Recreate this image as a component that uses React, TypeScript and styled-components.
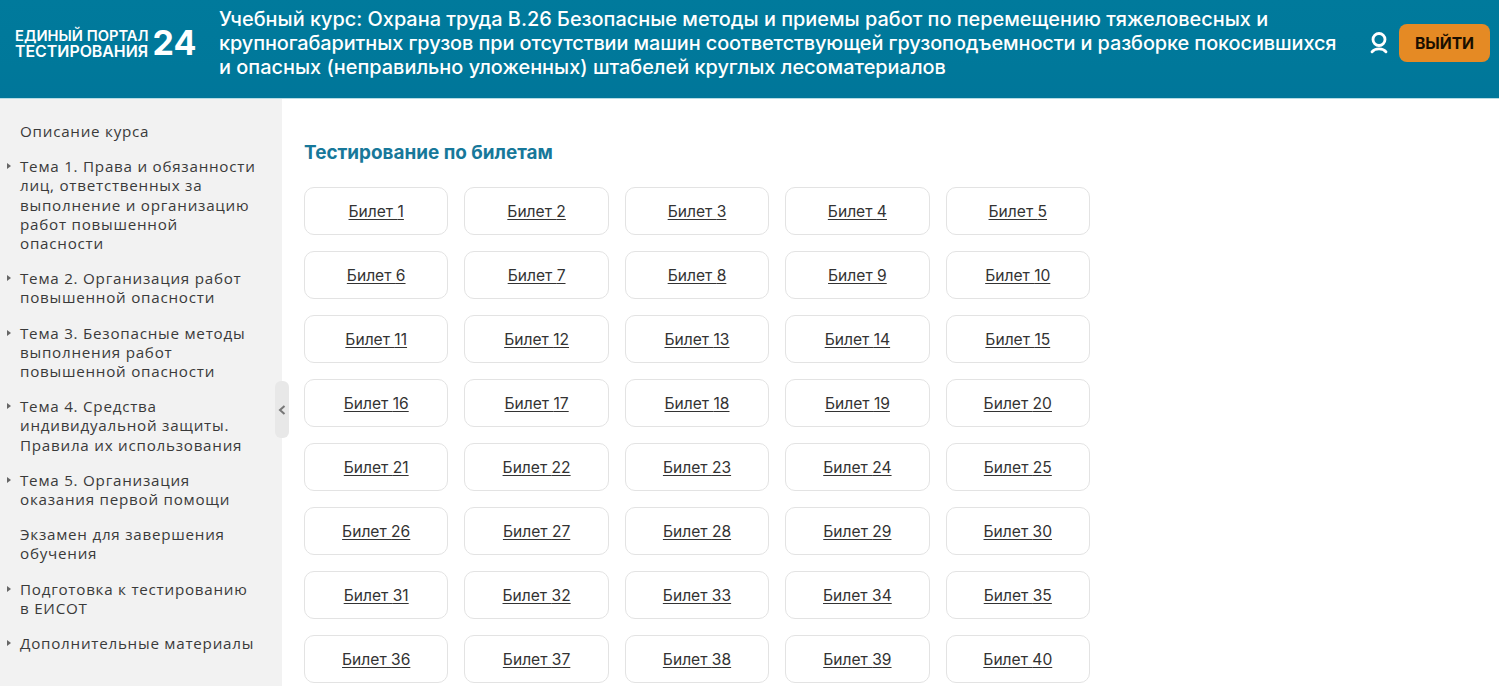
import React from "react";
import styled, { createGlobalStyle } from "styled-components";

const Global = createGlobalStyle`
  html, body { margin: 0; padding: 0; height: 686px; overflow: hidden; background: #fff; }
  body { font-family: Inter, "Liberation Sans", sans-serif; }
  * { box-sizing: border-box; }
`;

const Page = styled.div`
  display: flex;
  flex-direction: column;
  height: 686px;
  overflow: hidden;
`;

const Header = styled.header`
  flex: none;
  height: 99px;
  padding-bottom: 12px;
  display: flex;
  align-items: center;
  background: linear-gradient(180deg, #007a9c 0%, #00789a 70%, #00769a 100%);
  border-bottom: 1px solid #b5dbe4;
  color: #fff;
`;

const Logo = styled.div`
  flex: none;
  width: 219px;
  padding-left: 15px;
  display: flex;
  align-items: center;
  gap: 4px;
`;

const LogoText = styled.div`
  display: flex;
  flex-direction: column;
  font-weight: 600;
  white-space: nowrap;
  padding-top: 1px;
`;

const LogoLine = styled.span<{ $size: number }>`
  font-size: ${(p) => p.$size}px;
  line-height: 15px;
`;

const LogoNumber = styled.div`
  font-size: 34px;
  font-weight: 700;
  line-height: 40px;
`;

const Title = styled.h1`
  flex: none;
  width: 1125px;
  margin: 0;
  font-size: 19.9px;
  font-weight: 500;
  line-height: 24px;
  color: #fff;
`;

const TitleLine = styled.span<{ $tight?: boolean }>`
  display: block;
  white-space: nowrap;
  letter-spacing: ${(p) => (p.$tight ? "-0.09px" : "normal")};
`;

const Actions = styled.div`
  flex: 1;
  display: flex;
  align-items: center;
  justify-content: flex-end;
  gap: 11px;
  padding-right: 9px;
`;

const Exit = styled.button`
  width: 91px;
  height: 38px;
  border: 0;
  border-radius: 8px;
  background: #e58a24;
  color: #1a0f00;
  font-family: Inter, sans-serif;
  font-size: 15.7px;
  font-weight: 700;
`;

const Body = styled.div`
  flex: 1;
  min-height: 0;
  display: flex;
`;

const Sidebar = styled.aside`
  flex: none;
  width: 282px;
  position: relative;
  background: #f2f2f2;
  padding: 23px 24px 0 20px;
`;

const MenuItem = styled.div<{ $arrow?: boolean }>`
  position: relative;
  margin-bottom: 16px;
  font-family: "Open Sans", sans-serif;
  font-size: 15.2px;
  line-height: 19.2px;
  color: #3a3a3a;
  letter-spacing: 0.75px;
  ${(p) =>
    p.$arrow
      ? `&::before {
    content: "";
    position: absolute;
    left: -13px;
    top: 6px;
    border-left: 4px solid #666;
    border-top: 3px solid transparent;
    border-bottom: 3px solid transparent;
  }`
      : ""}
`;

const Toggle = styled.div`
  position: absolute;
  right: -7px;
  top: 282px;
  width: 14px;
  height: 57px;
  border-radius: 6px;
  background: #e8e8e8;
  display: flex;
  align-items: center;
  justify-content: center;
`;

const Main = styled.main`
  flex: 1;
  padding: 42px 0 0 22px;
`;

const Heading = styled.h2`
  margin: 0 0 23px;
  font-size: 18.9px;
  line-height: 23px;
  font-weight: 700;
  color: #17789a;
`;

const Grid = styled.div`
  width: 786px;
  display: grid;
  grid-template-columns: repeat(5, 1fr);
  column-gap: 16px;
  row-gap: 16px;
`;

const Ticket = styled.a`
  height: 48px;
  display: flex;
  align-items: center;
  justify-content: center;
  border: 1px solid #e3e3e3;
  border-radius: 10px;
  background: #fff;
  color: #333;
  font-size: 15.6px;
  text-decoration: underline;
  text-decoration-thickness: 1px;
  text-underline-offset: 2px;
`;

const menu: [string, boolean][] = [
  ["Описание курса", false],
  ["Тема 1. Права и обязанности лиц, ответственных за выполнение и организацию работ повышенной опасности", true],
  ["Тема 2. Организация работ повышенной опасности", true],
  ["Тема 3. Безопасные методы выполнения работ повышенной опасности", true],
  ["Тема 4. Средства индивидуальной защиты. Правила их использования", true],
  ["Тема 5. Организация оказания первой помощи", true],
  ["Экзамен для завершения обучения", false],
  ["Подготовка к тестированию в ЕИСОТ", true],
  ["Дополнительные материалы", true],
];

export default function App() {
  return (
    <Page>
      <Global />
      <Header>
        <Logo>
          <LogoText>
            <LogoLine $size={14.7}>ЕДИНЫЙ ПОРТАЛ</LogoLine>
            <LogoLine $size={15.9}>ТЕСТИРОВАНИЯ</LogoLine>
          </LogoText>
          <LogoNumber>24</LogoNumber>
        </Logo>
        <Title>
          <TitleLine>
            Учебный курс: Охрана труда В.26 Безопасные методы и приемы работ по перемещению тяжеловесных и
          </TitleLine>
          <TitleLine $tight>
            крупногабаритных грузов при отсутствии машин соответствующей грузоподъемности и разборке покосившихся
          </TitleLine>
          <TitleLine>и опасных (неправильно уложенных) штабелей круглых лесоматериалов</TitleLine>
        </Title>
        <Actions>
          <svg width="18" height="22" viewBox="0 0 18 22" fill="none" stroke="#fff" strokeWidth="2.8">
            <circle cx="9" cy="7.5" r="6" />
            <path d="M2 19.8 C5 15.8 13 15.8 16 19.8" strokeLinecap="round" />
          </svg>
          <Exit>ВЫЙТИ</Exit>
        </Actions>
      </Header>
      <Body>
        <Sidebar>
          {menu.map(([text, arrow]) => (
            <MenuItem key={text} $arrow={arrow}>
              {text}
            </MenuItem>
          ))}
          <Toggle>
            <svg width="8" height="10" viewBox="0 0 8 10" fill="none" stroke="#777" strokeWidth="2">
              <path d="M6.5 1 L2 5 L6.5 9" />
            </svg>
          </Toggle>
        </Sidebar>
        <Main>
          <Heading>Тестирование по билетам</Heading>
          <Grid>
            {Array.from({ length: 40 }, (_, i) => (
              <Ticket key={i}>Билет {i + 1}</Ticket>
            ))}
          </Grid>
        </Main>
      </Body>
    </Page>
  );
}
